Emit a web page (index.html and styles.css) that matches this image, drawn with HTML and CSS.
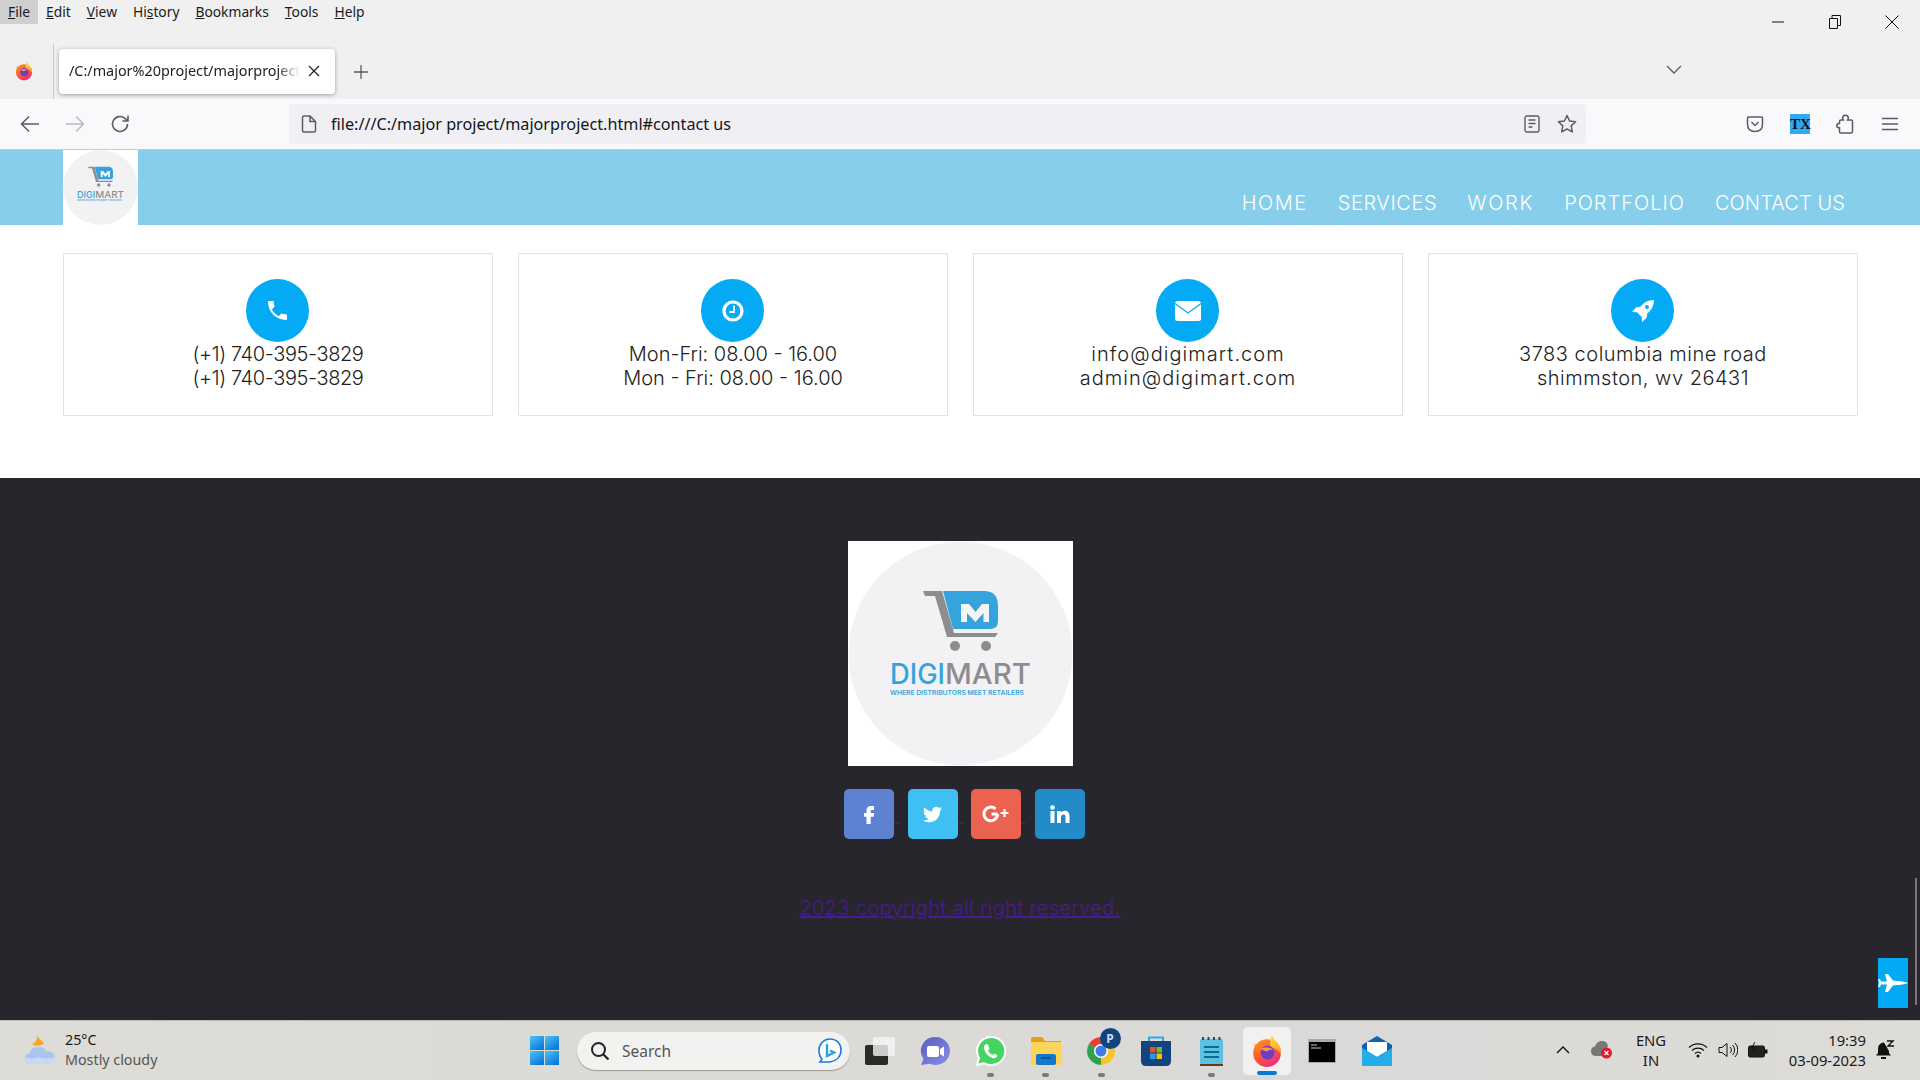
FILE: index.html
```html
<!DOCTYPE html>
<html lang="en">
<head>
  <meta charset="UTF-8" />
  <meta name="viewport" content="width=device-width, initial-scale=1.0" />
  <title>DigiMart</title>
  <link rel="stylesheet" href="styles.css">
</head>
<body>
  <!-- shared drawings -->
  <svg class="svg-defs" aria-hidden="true">
    <defs>
      <linearGradient id="ff-body" x1="0" y1="0" x2="0.6" y2="1">
        <stop offset="0" stop-color="#ff9a1f"/>
        <stop offset="0.55" stop-color="#ff5a36"/>
        <stop offset="1" stop-color="#e8307a"/>
      </linearGradient>
      <linearGradient id="ff-flame" x1="0.5" y1="0" x2="0.5" y2="1">
        <stop offset="0" stop-color="#ffe14a"/>
        <stop offset="1" stop-color="#ff9a1f"/>
      </linearGradient>
      <linearGradient id="win-blue" x1="0" y1="0" x2="0.7" y2="1">
        <stop offset="0" stop-color="#4cc5f7"/>
        <stop offset="1" stop-color="#0b78d6"/>
      </linearGradient>
      <linearGradient id="teams-grad" x1="0" y1="0" x2="1" y2="1">
        <stop offset="0" stop-color="#5a5cc0"/>
        <stop offset="1" stop-color="#8b8fe6"/>
      </linearGradient>
      <symbol id="firefox" viewBox="0 0 32 32">
        <circle cx="16" cy="18" r="13" fill="url(#ff-body)"/>
        <path d="M21 1c1 4 3 5 5.500 8 2.500 3.500 3 7 2.500 10-2-3-4-5-8-6-3-1-3-8 0-12z" fill="url(#ff-flame)"/>
        <path d="M4 8c1 3 3 4 6 3l3 1-5 5c-2-2-4-5-4-9z" fill="#ff7a1f"/>
        <circle cx="16.500" cy="17.500" r="6.500" fill="#6f3cc4"/>
        <path d="M10 14c3-2 9-2 12 1-3-.6-5 0-6 1.500-2-.5-4-1.500-6-2.500z" fill="#ff9a3c"/>
      </symbol>
      <symbol id="digimart" viewBox="0 0 225 225">
        <rect width="225" height="225" fill="#fff"/>
        <circle cx="112.500" cy="112.500" r="112" fill="#f2f2f4"/>
        <path d="M95 50h41q14 0 14 15v15q0 8-8 8h-37z" fill="#35a4dc"/>
        <path d="M113 81V63h8l6.500 8 6.500-8h7v18h-5.500v-9l-8 9-8.500-9v9z" fill="#f5f5f7"/>
        <path d="M75 50h19l12 42h44l-3 4H99L87 55H77z" fill="#8d8d90"/>
        <circle cx="107" cy="105" r="5" fill="#8d8d90"/>
        <circle cx="138" cy="105" r="5" fill="#8d8d90"/>
        <text x="42" y="143" class="logo-word" fill="#35a4dc" textLength="55" lengthAdjust="spacingAndGlyphs">DIGI</text>
        <text x="97" y="143" class="logo-word" fill="#8d8d90" textLength="86" lengthAdjust="spacingAndGlyphs">MART</text>
        <text x="42" y="154" class="logo-tag" fill="#35a4dc" textLength="134" lengthAdjust="spacingAndGlyphs">WHERE DISTRIBUTORS MEET RETAILERS</text>
      </symbol>
    </defs>
  </svg>

  <div class="titlebar">
    <div class="menubar">
      <span class="menu-item menu-item-open"><u>F</u>ile</span>
      <span class="menu-item"><u>E</u>dit</span>
      <span class="menu-item"><u>V</u>iew</span>
      <span class="menu-item">Hi<u>s</u>tory</span>
      <span class="menu-item"><u>B</u>ookmarks</span>
      <span class="menu-item"><u>T</u>ools</span>
      <span class="menu-item"><u>H</u>elp</span>
      <div class="window-controls">
        <span class="window-btn"><svg width="12" height="12" viewBox="0 0 12 12"><path d="M0 6h12" stroke="#111" fill="none"/></svg></span>
        <span class="window-btn"><svg width="12" height="14" viewBox="0 0 12 14"><path d="M.5 3.500h8v10h-8zM3 3.500V.500h8.500v10H8.500" stroke="#111" fill="none"/></svg></span>
        <span class="window-btn"><svg width="14" height="14" viewBox="0 0 14 14"><path d="M.5.500l13 13M13.500.500l-13 13" stroke="#111" fill="none"/></svg></span>
      </div>
    </div>
    <div class="tabbar">
      <div class="tab-app"><svg width="20" height="20"><use href="#firefox"/></svg></div>
      <div class="tab">
        <span class="tab-title">/C:/major%20project/majorproject.h</span>
        <svg class="tab-close" width="12" height="12" viewBox="0 0 12 12"><path d="M1 1l10 10M11 1L1 11" stroke="#222" stroke-width="1.300" fill="none"/></svg>
      </div>
      <div class="tab-new"><svg width="16" height="16" viewBox="0 0 16 16"><path d="M8 1v14M1 8h14" stroke="#5b5b66" stroke-width="1.300" fill="none"/></svg></div>
      <div class="tab-list"><svg width="16" height="10" viewBox="0 0 16 10"><path d="M1 1l7 7 7-7" stroke="#5b5b66" stroke-width="1.400" fill="none"/></svg></div>
    </div>
  </div>

  <div class="toolbar">
    <span class="tool-btn"><svg width="20" height="18" viewBox="0 0 20 18"><path d="M19 9H2M9 1.500L1.500 9 9 16.500" stroke="#5b5b66" stroke-width="1.500" fill="none"/></svg></span>
    <span class="tool-btn"><svg width="20" height="18" viewBox="0 0 20 18"><path d="M1 9h17M11 1.500L18.500 9 11 16.500" stroke="#b9b9be" stroke-width="1.500" fill="none"/></svg></span>
    <span class="tool-btn"><svg width="20" height="20" viewBox="0 0 20 20"><path d="M17.500 10a7.500 7.500 0 1 1-2.500-5.600L18 7M18 1.500V7h-5.500" stroke="#5b5b66" stroke-width="1.600" fill="none"/></svg></span>
    <div class="urlbar">
      <svg class="url-page" width="16" height="18" viewBox="0 0 16 18"><path d="M1.500 2.500q0-1.500 1.500-1.500h6l5.500 5.500v9q0 1.500-1.500 1.500H3q-1.500 0-1.500-1.500zM9 1v5.500h5.500" stroke="#5b5b66" stroke-width="1.500" fill="none"/></svg>
      <span class="url-text">file:///C:/major project/majorproject.html#contact us</span>
      <div class="url-actions">
        <span class="url-action"><svg width="16" height="18" viewBox="0 0 16 18"><rect x="1" y="1" width="14" height="16" rx="2" stroke="#5b5b66" stroke-width="1.400" fill="none"/><path d="M4.500 5h7M4.500 8.500h7M4.500 12h4" stroke="#5b5b66" stroke-width="1.400"/></svg></span>
        <span class="url-action"><svg width="20" height="20" viewBox="0 0 20 20"><path d="M10 1.500l2.600 5.500 6 .8-4.400 4.100 1.100 6L10 15l-5.300 2.900 1.100-6L1.400 7.800l6-.8z" stroke="#5b5b66" stroke-width="1.500" stroke-linejoin="round" fill="none"/></svg></span>
      </div>
    </div>
    <div class="tool-group">
      <span class="tool-btn"><svg width="18" height="18" viewBox="0 0 18 18"><path d="M2.500 2h13q1 0 1 1v6q0 7.500-7.500 7.500T1.500 9V3q0-1 1-1zM5.500 7L9 10.500 12.500 7" stroke="#5b5b66" stroke-width="1.500" fill="none"/></svg></span>
      <span class="tool-btn"><span class="tx-badge">TX</span></span>
      <span class="tool-btn"><svg width="18" height="20" viewBox="0 0 18 20"><path d="M9.500 1.200c-1.800 0-2.800 1.300-2.800 2.800 0 .8.300 1.400.6 2H5q-1.500 0-1.500 1.500v2H3c-1.500 0-2.200 1-2.200 2.200S1.500 13.700 3 13.700h.5v4q0 1.300 1.300 1.300H15q1.500 0 1.500-1.500V7.500Q16.500 6 15 6h-3.300c.4-.6.600-1.200.6-2 0-1.500-1-2.800-2.800-2.800z" stroke="#5b5b66" stroke-width="1.500" fill="none"/></svg></span>
      <span class="tool-btn"><svg width="16" height="14" viewBox="0 0 16 14"><path d="M0 1.500h16M0 7h16M0 12.500h16" stroke="#5b5b66" stroke-width="1.400" fill="none"/></svg></span>
    </div>
  </div>

  <div class="page">
    <header class="site-header">
      <svg class="site-logo" width="75" height="75"><use href="#digimart"/></svg>
      <nav class="site-nav">
        <a href="#home">HOME</a>
        <a href="#services">SERVICES</a>
        <a href="#work">WORK</a>
        <a href="#portfolio">PORTFOLIO</a>
        <a href="#contact">CONTACT US</a>
      </nav>
    </header>

    <section class="contact-cards">
      <div class="card card-phone">
        <span class="card-icon"><svg width="21" height="21" viewBox="2 2 20 20"><path d="M6.600 10.800c1.400 2.800 3.800 5.100 6.600 6.600l2.200-2.200c.3-.3.7-.4 1-.2 1.100.4 2.300.6 3.600.6.600 0 1 .4 1 1V20c0 .6-.4 1-1 1C10.600 21 3 13.400 3 4c0-.6.4-1 1-1h3.500c.6 0 1 .4 1 1 0 1.300.2 2.500.6 3.600.1.300 0 .7-.2 1z" fill="#fff"/></svg></span>
        <p>(+1) 740-395-3829<br>(+1) 740-395-3829</p>
      </div>
      <div class="card">
        <span class="card-icon"><svg width="22" height="22" viewBox="0 0 22 22"><circle cx="11" cy="11" r="9" stroke="#fff" stroke-width="3.200" fill="none"/><path d="M12 5.500V12H7.500" stroke="#fff" stroke-width="1.800" fill="none"/></svg></span>
        <p>Mon-Fri: 08.00 - 16.00<br>Mon - Fri: 08.00 - 16.00</p>
      </div>
      <div class="card card-mail">
        <span class="card-icon"><svg width="26" height="20" viewBox="0 0 26 20"><rect width="26" height="20" rx="2.500" fill="#fff"/><path d="M0 2.500l13 9.500 13-9.500" stroke="#05aaf5" stroke-width="1.300" fill="none"/></svg></span>
        <p>info@digimart.com<br>admin@digimart.com</p>
      </div>
      <div class="card card-place">
        <span class="card-icon"><svg width="24" height="24" viewBox="0 0 24 24"><path fill-rule="evenodd" d="M22.500 1c-5.500.2-10 2.500-13 6.800L5 8.500 1 13l5 .3 4.700 4.700.3 5 4.500-4 .7-4.500c4.300-3 6.500-7.500 6.800-13.500zM16 6a2 2 0 1 0 .01 0z" fill="#fff"/></svg></span>
        <p>3783 columbia mine road<br>shimmston, wv 26431</p>
      </div>
    </section>

    <footer class="site-footer">
      <svg class="footer-logo" width="225" height="225"><use href="#digimart"/></svg>
      <div class="social">
        <a class="social-link social-fb" href="#fb"><svg width="24" height="24" viewBox="0 0 24 24"><path d="M14.500 8H17V4h-3c-3 0-4.500 1.800-4.500 4.500V11H7v3.800h2.500V22h4.200v-7.200h3l.5-3.800h-3.500V8.800c0-.5.300-.8.800-.8z" fill="#fff"/></svg></a>
        <a class="social-link social-tw" href="#tw"><svg width="19" height="19" viewBox="0 0 24 24"><path d="M23.953 4.570a10 10 0 0 1-2.825.775 4.958 4.958 0 0 0 2.163-2.723c-.951.555-2.005.959-3.127 1.184a4.920 4.920 0 0 0-8.384 4.482C7.690 8.095 4.067 6.130 1.640 3.162a4.822 4.822 0 0 0-.666 2.475c0 1.710.870 3.213 2.188 4.096a4.904 4.904 0 0 1-2.228-.616v.060a4.923 4.923 0 0 0 3.946 4.827 4.996 4.996 0 0 1-2.212.085 4.936 4.936 0 0 0 4.604 3.417 9.867 9.867 0 0 1-6.102 2.105c-.390 0-.779-.023-1.170-.067a13.995 13.995 0 0 0 7.557 2.209c9.053 0 13.998-7.496 13.998-13.985 0-.210 0-.420-.015-.630A9.935 9.935 0 0 0 24 4.590z" fill="#fff"/></svg></a>
        <a class="social-link social-gp" href="#gp"><svg width="28" height="18" viewBox="0 0 28 18"><path d="M15.500 9h-6M15.600 9A6.800 6.800 0 1 1 13.500 4" stroke="#fff" stroke-width="3" fill="none"/><path d="M22.500 4v8M18.500 8h8" stroke="#fff" stroke-width="2.200" fill="none"/></svg></a>
        <a class="social-link social-in" href="#in"><svg width="20" height="18" viewBox="0 0 20 18"><circle cx="2.500" cy="2.500" r="2.300" fill="#fff"/><path d="M.5 6h4v12h-4zM7 6h3.800v1.700C11.400 6.700 12.700 5.700 14.600 5.700c4 0 4.900 2.600 4.900 6V18h-4v-5.500c0-1.400 0-3-1.900-3s-2.600 1.400-2.600 2.900V18H7z" fill="#fff"/></svg></a>
      </div>
      <a class="copyright" href="#top">2023 copyright all right reserved.</a>
    </footer>

    <a class="back-top" href="#top"><svg width="30" height="18" viewBox="0 0 30 18"><path d="M0 5h2l1 2.500h6L7 0h3l5 6.500 4 .5c5 .3 9 1 11 2-2 1-6 1.700-11 2l-4 .5L10 18H7l2-7.500H3L2 13H0l1-4z" fill="#fff"/></svg></a>
    <div class="scroll-thumb"></div>
  </div>

  <div class="taskbar">
    <div class="weather">
      <svg width="30" height="30" viewBox="0 0 30 30"><path d="M12 0c1.500 4 5 6 7 8-2 3-9 4-12 1 3-1 6-4 5-9z" fill="#f6a623"/><path d="M8 29q-8 0-8-6 0-4 5-5 1-6 8-6 6 0 8 4 9 0 9 7 0 6-8 6z" fill="#a9c4f0"/><path d="M0 22q7 3 14 0 8 3 16 0v2q0 5-8 5H8q-8 0-8-7z" fill="#c9d8f6"/></svg>
      <div class="weather-text">
        <span class="weather-temp">25°C</span>
        <span class="weather-sky">Mostly cloudy</span>
      </div>
    </div>
    <svg class="start" width="29" height="29" viewBox="0 0 29 29"><rect width="14" height="14" fill="url(#win-blue)"/><rect x="15" width="14" height="14" fill="url(#win-blue)"/><rect y="15" width="14" height="14" fill="url(#win-blue)"/><rect x="15" y="15" width="14" height="14" fill="url(#win-blue)"/></svg>
    <div class="searchbox">
      <svg width="20" height="20" viewBox="0 0 20 20"><circle cx="8.500" cy="8.500" r="6.500" stroke="#222" stroke-width="2" fill="none"/><path d="M13 13l5.500 5.500" stroke="#222" stroke-width="2.200"/></svg>
      <span class="search-text">Search</span>
      <svg class="search-bing" width="26" height="26" viewBox="0 0 26 26"><path d="M13 1c7 0 11 5 11 11 0 7-5 11-11 12H3l2-3C2 18 2 14 2 12 2 6 7 1 13 1z" stroke="#1a7ae0" stroke-width="1.600" fill="#fff"/><path d="M10 6v12l7-3.500-4-2" stroke="#25a6e8" stroke-width="2.400" fill="none"/></svg>
    </div>
    <div class="task-icons">
      <span class="task-icon"><svg width="30" height="28" viewBox="0 0 30 28"><rect y="8" width="23" height="20" rx="2" fill="#2a2a2a"/><rect x="8" width="22" height="19" rx="2" fill="#f5f5f5" opacity="0.8"/></svg></span>
      <span class="task-icon"><svg width="30" height="30" viewBox="0 0 30 30"><path d="M16 1a14 14 0 1 1-6 26.700L1 29l2.500-6A14 14 0 0 1 16 1z" fill="url(#teams-grad)"/><rect x="7" y="10" width="12" height="11" rx="2" fill="#fff"/><path d="M20 13l4-2.500v10L20 18z" fill="#fff"/></svg></span>
      <span class="task-icon is-running"><svg width="30" height="30" viewBox="0 0 30 30"><path d="M15 1a14 14 0 1 1-7 26L1 29l2-7A14 14 0 0 1 15 1z" fill="#44d45f" stroke="#fff" stroke-width="2"/><path d="M10 8c-2 1-2.500 3-1.500 6 1.500 4 4 6.500 8 8 2.500.7 4.500-.3 5-2.500l-3.500-2-1.500 1.500c-2-.7-4-3-4.500-4.500L13.500 13l-1.500-4.500z" fill="#fff"/></svg></span>
      <span class="task-icon is-running"><svg width="30" height="28" viewBox="0 0 30 28"><path d="M0 2q0-2 2-2h9l3 4h16v6H0z" fill="#e0a30f"/><path d="M0 5h30v23H0z" fill="#fcd45c"/><rect x="5" y="17" width="20" height="11" rx="2" fill="#1478c8"/><path d="M10 21h10" stroke="#0b4d8a" stroke-width="1.500"/></svg></span>
      <span class="task-icon is-running task-chrome">
        <svg width="30" height="30" viewBox="0 0 30 30"><path d="M15 15L2.900 8A14 14 0 0 1 27.100 8z" fill="#e44133"/><path d="M15 15L27.100 8A14 14 0 0 1 15 29z" fill="#f7c52b"/><path d="M15 15V29A14 14 0 0 1 2.900 8z" fill="#2fa04f"/><circle cx="15" cy="15" r="7" fill="#fff"/><circle cx="15" cy="15" r="5.500" fill="#3c7ee6"/></svg>
        <span class="chrome-badge">P</span>
      </span>
      <span class="task-icon"><svg width="30" height="30" viewBox="0 0 30 30"><path d="M8 6V1.500h14V6" stroke="#2aa9e8" stroke-width="2" fill="none"/><path d="M0 5h30v20q0 5-5 5H5q-5 0-5-5z" fill="#13447f"/><rect x="9" y="11" width="5.500" height="5.500" fill="#e8502a"/><rect x="15.500" y="11" width="5.500" height="5.500" fill="#7db81e"/><rect x="9" y="17.500" width="5.500" height="5.500" fill="#18a0e8"/><rect x="15.500" y="17.500" width="5.500" height="5.500" fill="#fbbc09"/></svg></span>
      <span class="task-icon is-running"><svg width="24" height="30" viewBox="0 0 24 30"><rect y="3" width="23" height="25" rx="1.500" fill="#5cc0e0"/><rect y="28" width="23" height="2" fill="#6a3a1c"/><path d="M3 1v3M8.500 1v3M14 1v3M19.500 1v3" stroke="#14506e" stroke-width="2"/><path d="M4 11h15M4 16h15M4 21h15" stroke="#0c6a90" stroke-width="2"/></svg></span>
      <span class="task-icon is-active"><svg width="34" height="34"><use href="#firefox"/></svg></span>
      <span class="task-icon"><svg width="28" height="24" viewBox="0 0 28 24"><rect width="28" height="24" fill="#a9a9a9"/><rect x="1" y="3" width="26" height="20" fill="#000"/><path d="M3 6h6M3 9h10" stroke="#ccc"/></svg></span>
      <span class="task-icon"><svg width="30" height="30" viewBox="0 0 30 30"><path d="M0 9L15 0l15 9v21H0z" fill="#0f62ad"/><path d="M5 6h20v9l-10 6-10-6z" fill="#fff"/><path d="M0 12l15 9 15-9v18H0z" fill="#23aeea"/></svg></span>
    </div>
    <div class="tray">
      <span class="tray-slot tray-chevron"><svg width="14" height="8" viewBox="0 0 14 8"><path d="M1 7l6-6 6 6" stroke="#111" stroke-width="1.400" fill="none"/></svg></span>
      <span class="tray-slot"><svg width="22" height="18" viewBox="0 0 22 18"><path d="M5 15q-5 0-5-5 0-4 4-4.500C5 2 8 0 11 0q5 0 6 5l-6 10z" fill="#777"/><circle cx="15.500" cy="12" r="5.500" fill="#e01b2f"/><path d="M13.500 10l4 4M17.500 10l-4 4" stroke="#fff" stroke-width="1.300"/></svg></span>
      <span class="tray-lang">ENG<br>IN</span>
      <span class="tray-slot"><svg width="20" height="16" viewBox="0 0 20 16"><path d="M1 5.500a13 13 0 0 1 18 0M4 8.500a9 9 0 0 1 12 0M7 11.500a4.500 4.500 0 0 1 6 0" stroke="#111" stroke-width="1.200" fill="none"/><circle cx="10" cy="14" r="1.500" fill="#111"/></svg></span>
      <span class="tray-slot"><svg width="20" height="16" viewBox="0 0 20 16"><path d="M1 5.500h3L9 1.500v13L4 10.500H1z" stroke="#111" fill="none"/><path d="M12 5a4 4 0 0 1 0 6M14.500 3a7 7 0 0 1 0 10M17 1a10 10 0 0 1 0 14" stroke="#111" fill="none"/></svg></span>
      <span class="tray-slot"><svg width="20" height="16" viewBox="0 0 20 16"><rect x=".5" y="4" width="16" height="11" rx="1.500" stroke="#111" fill="#222"/><rect x="17" y="7.500" width="2.500" height="4" fill="#111"/><path d="M7 0L3.500 6h3L5 10" stroke="#111" fill="none"/></svg></span>
      <span class="tray-clock">19:39<br>03-09-2023</span>
      <span class="tray-slot tray-bell"><svg width="20" height="20" viewBox="0 0 20 20"><path d="M9 2.500Q3 3 3 9v4l-2 2.500h15L14 13v-2z" fill="#111"/><path d="M6 18h5" stroke="#111" stroke-width="2"/><path d="M12 1h6l-5 5h6" stroke="#111" stroke-width="1.400" fill="none"/></svg></span>
    </div>
  </div>
</body>
</html>
```

FILE: styles.css
```css
* { box-sizing: border-box; }

html, body { height: 100%; }

body {
  margin: 0;
  height: 1080px;
  display: flex;
  flex-direction: column;
  overflow: hidden;
  font-family: "Noto Sans", sans-serif;
  color: #111;
  background: #fff;
}

.svg-defs { position: absolute; width: 0; height: 0; }

.logo-word { font-family: "Inter", sans-serif; font-size: 28px; font-weight: 500; }
.logo-tag { font-family: "Inter", sans-serif; font-size: 6px; font-weight: 600; }

/* browser chrome */
.titlebar { background: #f0f0f0; height: 99px; }

.menubar { display: flex; height: 24px; font-size: 13.8px; line-height: 24px; }
.menu-item { padding: 0 8px; color: #1a1a1a; }
.menu-item-open { background: #cfcfcf; }

.window-controls { display: flex; margin-left: auto; height: 44px; }
.window-btn { width: 57px; display: flex; align-items: center; justify-content: center; }

.tabbar { display: flex; height: 75px; }
.tab-app { width: 54px; margin-top: 20px; padding: 17px 0 0 14px; border-right: 1px solid #c8c8c8; }
.tab {
  width: 276px;
  height: 45px;
  margin: 25px 0 0 5px;
  padding: 0 15px 2px 10px;
  display: flex;
  align-items: center;
  background: #fff;
  border-radius: 4px;
  box-shadow: 0 1px 4px rgba(0, 0, 0, 0.35);
}
.tab-title {
  flex: 1;
  overflow: hidden;
  white-space: nowrap;
  font-size: 14.4px;
  color: #222;
  -webkit-mask-image: linear-gradient(to right, #000 90%, transparent);
  mask-image: linear-gradient(to right, #000 90%, transparent);
}
.tab-close { margin-left: 8px; flex: none; }
.tab-new { width: 28px; margin: 25px 0 0 12px; display: flex; align-items: center; justify-content: center; height: 45px; }
.tab-list { width: 28px; height: 45px; margin: 23px 232px 0 auto; display: flex; align-items: center; justify-content: center; }

.toolbar {
  display: flex;
  align-items: center;
  height: 51px;
  padding: 0 7.5px;
  background: #f9f9fb;
  border-bottom: 1px solid #ccc;
}
.tool-btn { width: 45px; height: 40px; display: flex; align-items: center; justify-content: center; }
.tool-group { display: flex; margin-left: auto; }
.tx-badge {
  width: 20px;
  height: 20px;
  background: #2eaaf5;
  color: #111;
  font: bold 15px/20px "Liberation Serif", serif;
  text-align: center;
}

.urlbar {
  display: flex;
  align-items: center;
  width: 1297px;
  height: 40px;
  margin-left: 146.5px;
  padding: 0 1.5px 0 12px;
  background: #f0f0f4;
  border-radius: 4px;
}
.url-page { margin-right: 14px; }
.url-text { font-size: 16.2px; color: #15141a; white-space: nowrap; }
.url-actions { display: flex; margin-left: auto; }
.url-action { width: 35px; display: flex; align-items: center; justify-content: center; }

.page { position: relative; flex: 1; display: flex; flex-direction: column; font-family: "Inter", sans-serif; font-weight: 300; }

.site-header { display: flex; height: 75px; padding: 0 75px 0 63px; background: #87ceeb; }
.site-logo { display: block; }
.site-nav { display: flex; gap: 30px; margin-left: auto; padding-top: 41px; }
.site-nav a { color: #fff; font-size: 20px; line-height: 24px; text-decoration: none; white-space: nowrap; }
.site-nav a:nth-child(1) { letter-spacing: 1.5px; }
.site-nav a:nth-child(2) { letter-spacing: 0.6px; }
.site-nav a:nth-child(3) { letter-spacing: 1.7px; }
.site-nav a:nth-child(4) { letter-spacing: 1px; }
.site-nav a:nth-child(5) { letter-spacing: 0.1px; }

.contact-cards { display: grid; grid-template-columns: repeat(4, 430px); gap: 25px; padding: 28px 0 0 63px; height: 253px; }
.card { height: 163px; padding-top: 25px; border: 1px solid #e3e3e3; text-align: center; }
.card-icon {
  width: 63px;
  height: 63px;
  margin-left: 182px;
  display: flex;
  align-items: center;
  justify-content: center;
  border-radius: 50%;
  background: #05aaf5;
}
.card p { margin: 0; font-size: 20px; line-height: 24px; color: #222; }
.card-phone p { letter-spacing: -0.4px; }
.card-mail p { letter-spacing: 1.05px; }
.card-place p { letter-spacing: 0.5px; }

.site-footer { flex: 1; display: flex; flex-direction: column; align-items: center; padding-top: 63px; background: #26262c; }
.footer-logo { display: block; }

.social { display: flex; gap: 13.67px; margin-top: 23px; padding-left: 9px; }
.social-link { position: relative; width: 50px; height: 50px; display: flex; align-items: center; justify-content: center; border-radius: 5px; }
.social-link:not(:last-child)::after {
  content: "";
  position: absolute;
  left: 100%;
  top: 34px;
  width: 5px;
  height: 1px;
  background: #4a1a90;
}
.social-fb { background: #5d82d1; }
.social-tw { background: #40bff5; }
.social-gp { background: #eb6250; }
.social-in { background: #238cc8; }

.copyright { margin-top: 57px; font-size: 20px; line-height: 24px; letter-spacing: 0.36px; color: #4a1a90; white-space: nowrap; }

.back-top {
  position: absolute;
  right: 12px;
  bottom: 12px;
  width: 30px;
  height: 50px;
  display: flex;
  align-items: center;
  justify-content: center;
  background: #03a9f4;
}
.scroll-thumb { position: absolute; right: 3px; top: 728px; width: 2px; height: 127px; background: #77777d; }

/* windows taskbar */
.taskbar {
  display: flex;
  align-items: center;
  height: 60px;
  flex: none;
  padding-bottom: 2px;
  background: linear-gradient(to right, #dedcd6, #dcdad5 45%, #d9d9d8 70%, #dddcd6);
  border-top: 1px solid #b9b9b6;
}

.weather { display: flex; align-items: center; gap: 10px; width: 530px; padding-left: 25px; }
.weather-text { display: flex; flex-direction: column; font-size: 14.3px; line-height: 20px; }
.weather-temp { color: #1a1a1a; }
.weather-sky { color: #555; }

.start { flex: none; margin-top: 2px; }

.searchbox {
  display: flex;
  align-items: center;
  width: 273px;
  height: 38px;
  margin: 2px 0 0 18px;
  padding: 0 7px 0 13px;
  background: #f2f2f0;
  border-radius: 19px;
  box-shadow: 0 1px 1px rgba(0, 0, 0, 0.3);
}
.search-text { margin-left: 12px; font-size: 15.5px; color: #555; }
.search-bing { margin-left: auto; }

.task-icons { display: flex; margin: 2px 0 0 2.5px; }
.task-icon { position: relative; width: 55.25px; height: 48px; display: flex; align-items: center; justify-content: center; }
.is-running::after {
  content: "";
  position: absolute;
  left: 24px;
  bottom: -2px;
  width: 7px;
  height: 4px;
  border-radius: 2px;
  background: #7a7a7a;
}
.is-active::before {
  content: "";
  position: absolute;
  inset: 0 3.5px;
  border-radius: 5px;
  background: #f1f1f0;
}
.is-active svg { position: relative; }
.is-active::after {
  content: "";
  position: absolute;
  left: 17.5px;
  bottom: 0;
  width: 20px;
  height: 4px;
  border-radius: 2px;
  background: #0a78d4;
}
.chrome-badge {
  position: absolute;
  left: 26px;
  top: 1px;
  width: 21px;
  height: 21px;
  border-radius: 50%;
  background: #12447c;
  color: #c8dcf5;
  font-size: 12px;
  font-weight: 700;
  line-height: 21px;
  text-align: center;
}

.tray { display: flex; align-items: center; margin-left: auto; padding-right: 16px; font-size: 14.8px; line-height: 20px; }
.tray-slot { width: 30px; display: flex; justify-content: center; }
.tray-chevron { width: 40px; }
.tray-slot:nth-child(2) { width: 38px; }
.tray-lang { width: 60px; margin-right: 2px; text-align: center; color: #1a1a1a; }
.tray-clock { width: 93px; text-align: right; color: #1a1a1a; }
.tray-bell { width: 38px; }
```
